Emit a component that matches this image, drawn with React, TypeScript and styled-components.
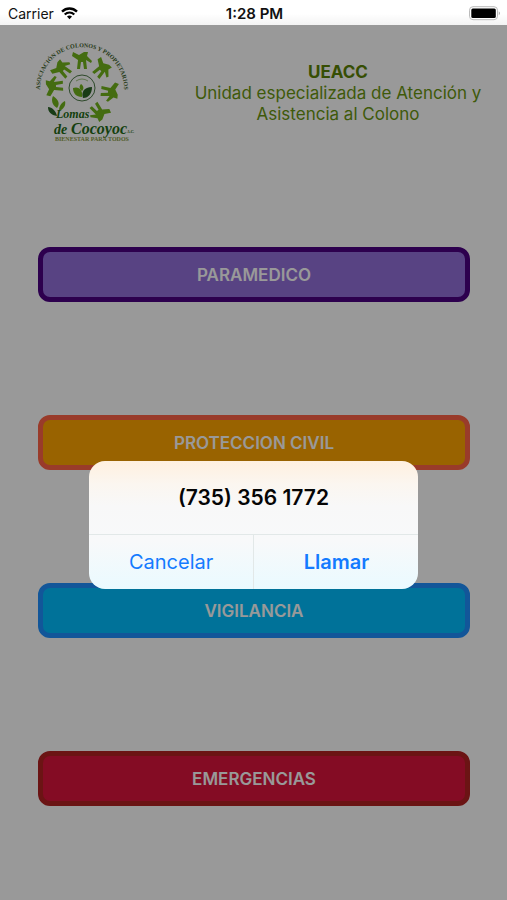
import React from "react";
import styled, { createGlobalStyle } from "styled-components";

const GlobalStyle = createGlobalStyle`
  * { box-sizing: border-box; }
  body { margin: 0; background: #fff; }
  body, button { font-family: Inter, "Liberation Sans", sans-serif; }
`;

const Screen = styled.div`
  display: flex;
  flex-direction: column;
  min-height: 100vh;
`;

const StatusBar = styled.header`
  display: grid;
  grid-template-columns: 1fr auto 1fr;
  align-items: center;
  height: 25px;
  padding: 2px 6px 0 8px;
  background: linear-gradient(#fff 55%, #f3f3f3);
  color: #111;
  font-size: 14px;
  line-height: 20px;
`;

const Carrier = styled.div`
  display: flex;
  align-items: center;
  gap: 7px;
`;

const Clock = styled.time`
  font-size: 15px;
  font-weight: 600;
`;

const Battery = styled.svg`
  justify-self: end;
`;

const Stage = styled.div`
  position: relative;
  flex: 1;
  display: flex;
  flex-direction: column;
`;

const Page = styled.main`
  flex: 1;
  background: #fff;
`;

const Intro = styled.div`
  display: grid;
  grid-template-columns: 1fr 2fr;
  height: 222px;
`;

const Logo = styled.svg`
  justify-self: center;
  margin-top: 13px;
`;

const Heading = styled.div`
  padding: 37px 24px 0;
  color: #69960f;
  font-size: 17px;
  line-height: 21px;
  text-align: center;
`;

const Title = styled.h1`
  margin: 0;
  color: #5b8205;
  font-size: 17px;
  line-height: 21px;
  font-weight: 700;
`;

const Subtitle = styled.p`
  margin: 0;
`;

const Services = styled.div`
  display: flex;
  flex-direction: column;
  gap: 113px;
  padding: 0 37px 94px 38px;
`;

const ServiceButton = styled.button<{ $fill: string; $edge: string }>`
  height: 55px;
  padding: 0;
  border: 5px solid ${(p) => p.$edge};
  border-radius: 12px;
  background: ${(p) => p.$fill};
  color: #fff;
  font-size: 17px;
  line-height: 20px;
  font-weight: 600;
`;

const Scrim = styled.div`
  position: absolute;
  inset: 0;
  display: flex;
  justify-content: center;
  align-items: flex-start;
  padding-top: 436px;
  background: rgba(0, 0, 0, 0.4);
`;

const Alert = styled.div`
  width: 65%;
  border-radius: 16px;
  overflow: hidden;
  background: linear-gradient(#fff0df, #fbf6f0 18%, #f8f8f8 35%, #f8f9fa 62%, #eafaff);
`;

const AlertTitle = styled.h2`
  margin: 0;
  padding: 25px 16px 24px;
  color: #050505;
  font-size: 21px;
  line-height: 24px;
  font-weight: 600;
  text-align: center;
`;

const AlertActions = styled.div`
  display: grid;
  grid-template-columns: 1fr 1fr;
  border-top: 1px solid #e2e8e8;
`;

const AlertButton = styled.button<{ $strong?: boolean }>`
  height: 54px;
  padding: 0;
  border: 0;
  background: transparent;
  color: #147bff;
  font-size: 20px;
  line-height: 24px;
  font-weight: ${(p) => (p.$strong ? 600 : 400)};

  & + & {
    border-left: 1px solid #e2e8e8;
  }
`;

const services = [
  { label: "PARAMEDICO", fill: "#9370db", edge: "#4b0082" },
  { label: "PROTECCION CIVIL", fill: "#ffa500", edge: "#ff6347" },
  { label: "VIGILANCIA", fill: "#00bfff", edge: "#1e90ff" },
  { label: "EMERGENCIAS", fill: "#dc143c", edge: "#b22222" },
];

const hands = [
  { x: 24, y: 48, turn: -92 },
  { x: 32, y: 31, turn: -48 },
  { x: 52, y: 22, turn: 0 },
  { x: 72, y: 31, turn: 44 },
  { x: 80, y: 54, turn: 96 },
  { x: 69, y: 74, turn: 142 },
];

function CommunityLogo() {
  return (
    <Logo width="110" height="110" viewBox="0 0 110 110" role="img" aria-label="Lomas de Cocoyoc">
      <defs>
        <path id="arc" d="M12 64A42 42 0 1 1 92 64" />
        <path
          id="hand"
          d="M-9 -8L-3 -5L2 -8L6 -8L5 -4L10 1L9 3L4 0L5 9L2 9L1 2L-1 2L-2 9L-5 9L-4 0L-10 -4Z"
        />
      </defs>
      <text fill="#41632c" fontFamily="Liberation Serif" fontWeight="700" fontSize="6" textAnchor="middle">
        <textPath href="#arc" startOffset="50%">ASOCIACIÓN DE COLONOS Y PROPIETARIOS</textPath>
      </text>
      <g fill="#72b51b">
        {hands.map((h) => (
          <use key={h.turn} href="#hand" transform={`translate(${h.x} ${h.y}) rotate(${h.turn})`} />
        ))}
      </g>
      <circle cx="52" cy="50" r="13" fill="none" stroke="#4d7a48" strokeWidth="1" />
      <path d="M46 43q6-4 12 0" fill="none" stroke="#a3c785" strokeWidth="1" />
      <path d="M43 50C49 48 53 52 52 59C46 59 43 55 43 50Z" fill="#72b51b" />
      <path d="M62 49C54 49 51 54 53 60C59 60 62 55 62 49Z" fill="#2b6426" />
      <path d="M51 46C54 48 54 51 52 53C49 51 49 48 51 46Z" fill="#72b51b" />
      <path d="M23 58C29 62 30 66 27 70C22 67 21 62 23 58Z" fill="#72b51b" />
      <path d="M18 69C22 69 26 73 27 78C21 77 18 74 18 69Z" fill="#2b6426" />
      <path d="M35 63C36 67 34 71 29 73C29 68 31 65 35 63Z" fill="#72b51b" />
      <g fill="#246b16" fontFamily="Liberation Serif" fontStyle="italic" fontWeight="700">
        <text x="26" y="80" fontSize="12">Lomas</text>
        <text x="24" y="96" fontSize="14">de</text>
        <text x="41" y="96" fontSize="16">Cocoyoc</text>
        <text x="97" y="95" fontSize="4">A.C.</text>
      </g>
      <text x="25" y="103" fill="#8a9a43" fontFamily="Liberation Serif" fontWeight="700" fontSize="6">
        BIENESTAR PARA TODOS
      </text>
    </Logo>
  );
}

export default function App() {
  return (
    <Screen>
      <GlobalStyle />
      <StatusBar>
        <Carrier>
          Carrier
          <svg width="17" height="13" viewBox="0 0 17 13" fill="none" stroke="#000" aria-label="Wi-Fi">
            <path d="M1 4.6C5.4 .4 11.6 .4 16 4.6" strokeWidth="2.4" />
            <path d="M3.7 7.5C6.5 4.9 10.5 4.9 13.3 7.5" strokeWidth="2.2" />
            <path d="M6 9.6Q8.5 7.6 11 9.6L8.5 12.3Z" fill="#000" stroke="none" />
          </svg>
        </Carrier>
        <Clock>1:28 PM</Clock>
        <Battery width="32" height="15" viewBox="0 0 32 15" aria-label="Battery">
          <rect x="0.5" y="0.7" width="28" height="13" rx="3.5" fill="#fff" stroke="#bbb" />
          <rect x="2.3" y="2.5" width="24.5" height="9.5" rx="1.5" fill="#000" />
          <path d="M29.8 5.2q2 2 0 4z" fill="#999" />
        </Battery>
      </StatusBar>
      <Stage>
        <Page>
          <Intro>
            <CommunityLogo />
            <Heading>
              <Title>UEACC</Title>
              <Subtitle>Unidad especializada de Atención y Asistencia al Colono</Subtitle>
            </Heading>
          </Intro>
          <Services>
            {services.map((s) => (
              <ServiceButton key={s.label} type="button" $fill={s.fill} $edge={s.edge}>
                {s.label}
              </ServiceButton>
            ))}
          </Services>
        </Page>
        <Scrim>
          <Alert role="alertdialog" aria-modal="true" aria-labelledby="alert-title">
            <AlertTitle id="alert-title">(735) 356 1772</AlertTitle>
            <AlertActions>
              <AlertButton type="button">Cancelar</AlertButton>
              <AlertButton type="button" $strong>Llamar</AlertButton>
            </AlertActions>
          </Alert>
        </Scrim>
      </Stage>
    </Screen>
  );
}
